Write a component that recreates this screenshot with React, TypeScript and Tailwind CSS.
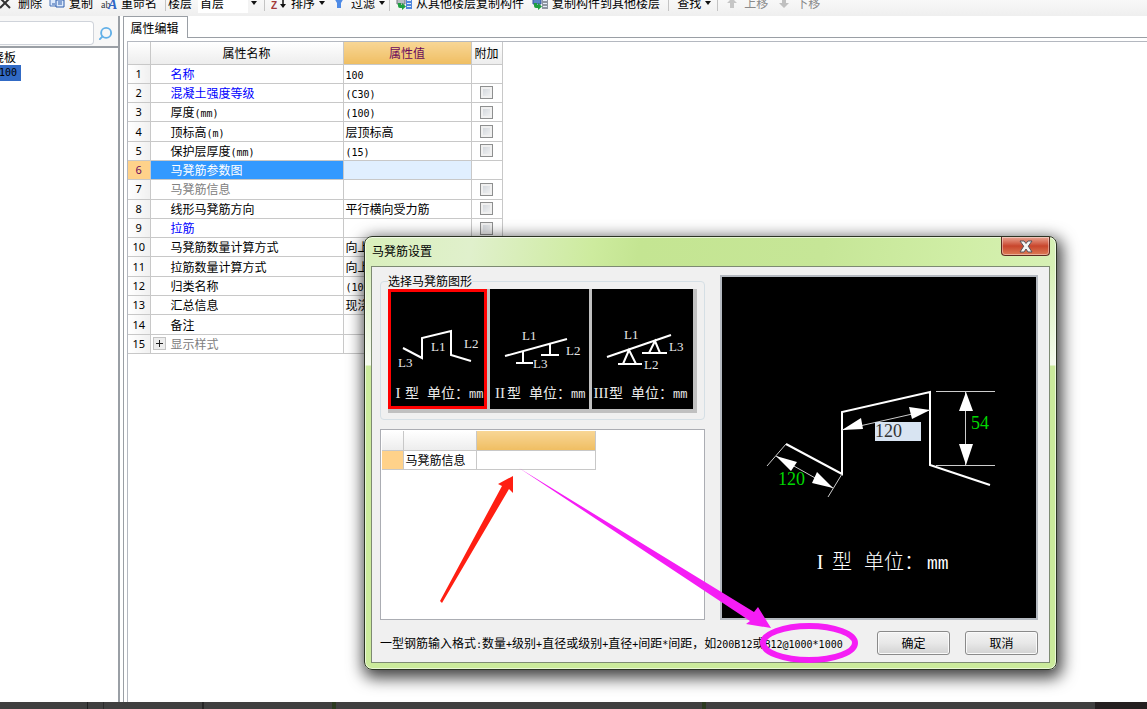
import React from 'react';
import { Search } from 'lucide-react';

type Row = {
  name: string;
  value?: string;
  color?: string;
  check?: boolean;
  selected?: boolean;
  expandable?: boolean;
};

const rows: Row[] = [
  { name: '名称', value: '100', color: 'text-[#0000ff]' },
  { name: '混凝土强度等级', value: '(C30)', color: 'text-[#0000ff]', check: true },
  { name: '厚度(mm)', value: '(100)', check: true },
  { name: '顶标高(m)', value: '层顶标高', check: true },
  { name: '保护层厚度(mm)', value: '(15)', check: true },
  { name: '马凳筋参数图', color: 'text-white', selected: true },
  { name: '马凳筋信息', color: 'text-[#808080]', check: true },
  { name: '线形马凳筋方向', value: '平行横向受力筋', check: true },
  { name: '拉筋', color: 'text-[#0000ff]', check: true },
  { name: '马凳筋数量计算方式', value: '向上', check: true },
  { name: '拉筋数量计算方式', value: '向上', check: true },
  { name: '归类名称', value: '(100)', check: true },
  { name: '汇总信息', value: '现浇', check: true },
  { name: '备注', check: true },
  { name: '显示样式', color: 'text-[#808080]', expandable: true },
];

// Latin runs are half as wide as the Chinese characters around them
const Mixed: React.FC<{ text: string }> = ({ text }) => (
  <>
    {text.split(/([\x20-\x7e]+)/).map((part, i) =>
      i % 2 ? (
        <span key={i} className="text-[10px] leading-none font-['DejaVu_Sans_Mono',monospace]">{part}</span>
      ) : (
        part
      )
    )}
  </>
);

const Caret = () => (
  <svg width="6" height="4" viewBox="0 0 6 4" className="shrink-0">
    <path d="M0 0h6L3 4z" fill="#111" />
  </svg>
);

const Separator: React.FC<{ className: string }> = ({ className }) => (
  <div className={`h-4 w-px shrink-0 bg-[#c4c4c4] ${className}`} />
);

const ToolButton: React.FC<{
  label: string;
  className?: string;
  caret?: boolean;
  disabled?: boolean;
  children?: React.ReactNode;
}> = ({ label, className = '', caret, disabled, children }) => (
  <button
    disabled={disabled}
    className={`flex shrink-0 items-center gap-1 whitespace-nowrap leading-4 ${disabled ? 'text-[#8a8a8a]' : ''} ${className}`}
  >
    {children}
    {label}
    {caret && <Caret />}
  </button>
);

const BuildingIcon: React.FC<{ flip?: boolean }> = ({ flip }) => (
  <svg width="16" height="16" viewBox="0 0 16 16">
    <path d="M1 3h8v6H1z" fill={flip ? '#5b86c8' : '#b9bec4'} stroke={flip ? '#34549a' : '#70767c'} />
    <path d="M10 2h6v12h-6z" fill={flip ? '#8d95a0' : '#4f86dc'} />
    <path d="M11 5.5h4M11 8.500h4M11 11.500h4" stroke="#e6eefb" />
    <path d="M2 8h3v2h1V8l4 3.500L6 15v-2H4q-2 0-2-2z" fill="#1fa040" />
  </svg>
);

const Toolbar = () => (
  <header className="h-4 shrink-0 bg-gradient-to-b from-[#f8f8f8] to-[#efefef]">
    <div className="flex h-1.5 items-center">
      <ToolButton label="删除">
        <svg width="14" height="16" viewBox="0 0 14 16">
          <path d="M0 3l10 10M10 3L0 13" stroke="#333" strokeWidth="2" />
        </svg>
      </ToolButton>
      <ToolButton label="复制" className="ml-[7px]">
        <svg width="16" height="16" viewBox="0 0 16 16">
          <path d="M1 2h8v9H1z" fill="#dce9fb" stroke="#4a74b8" />
          <path d="M7 5h8v7H7z" fill="#dce9fb" stroke="#2c5cab" />
          <path d="M9 7h4M9 9h4M3 9h3" stroke="#2c5cab" />
        </svg>
      </ToolButton>
      <ToolButton label="重命名" className="ml-2">
        <svg width="16" height="16" viewBox="0 0 16 16">
          <text x="0" y="13" fontSize="10" fill="#333" fontFamily="Liberation Serif">ab</text>
          <text x="7" y="14" fontSize="14" fontWeight="bold" fontStyle="italic" fill="#2f66c4" fontFamily="Liberation Serif">A</text>
        </svg>
      </ToolButton>
      <Separator className="ml-2" />
      <label htmlFor="floor" className="ml-0.5 shrink-0">楼层</label>
      <div className="relative ml-1.5 flex h-5 w-[62px] shrink-0 items-center bg-gradient-to-r from-white from-80% to-[#f3f3f3] to-80%">
        <select id="floor" className="h-5 w-full appearance-none px-0.5 leading-4">
          <option>首层</option>
        </select>
        <span className="pointer-events-none absolute right-[3px]"><Caret /></span>
      </div>
      <Separator className="ml-1" />
      <ToolButton label="排序" caret className="ml-1.5">
        <svg width="16" height="16" viewBox="0 0 16 16">
          <text x="0" y="14" fontSize="10" fontWeight="bold" fill="#a33a3a" fontFamily="Liberation Sans">Z</text>
          <path d="M12 2v10" stroke="#111" strokeWidth="1.5" />
          <path d="M9 9h6l-3 4z" fill="#111" />
        </svg>
      </ToolButton>
      <ToolButton label="过滤" caret className="ml-1.5">
        <svg width="16" height="16" viewBox="0 0 16 16">
          <path d="M3 3h10l-3 5v5H6V8z" fill="#4f8be6" />
        </svg>
      </ToolButton>
      <Separator className="ml-1" />
      <ToolButton label="从其他楼层复制构件" className="ml-1.5"><BuildingIcon /></ToolButton>
      <ToolButton label="复制构件到其他楼层" className="ml-2"><BuildingIcon flip /></ToolButton>
      <Separator className="ml-2" />
      <ToolButton label="查找" caret className="ml-2" />
      <Separator className="ml-1.5" />
      <ToolButton label="上移" disabled className="ml-1.5">
        <svg width="16" height="16" viewBox="0 0 16 16">
          <path d="M8 3l5 5h-3v5H6V8H3z" fill="#c6c6c6" />
        </svg>
      </ToolButton>
      <ToolButton label="下移" disabled className="ml-2">
        <svg width="16" height="16" viewBox="0 0 16 16">
          <path d="M8 13l5-5h-3V3H6v5H3z" fill="#c0c0c0" />
        </svg>
      </ToolButton>
    </div>
  </header>
);

const Sidebar = () => (
  <aside className="flex w-[120px] shrink-0 flex-col border-r-2 border-[#9a9fa5]">
    <div className="flex h-[30px] items-end bg-[#f7f7f7] pb-px">
      <input
        aria-label="搜索构件"
        className="h-6 w-[94px] rounded-r-sm border border-l-0 border-[#cfd3da] bg-white"
      />
      <button aria-label="搜索" className="ml-1 pb-1">
        <Search size={15} strokeWidth={3} className="-scale-x-100 text-[#62b0e8]" />
      </button>
    </div>
    <div className="flex-1 border-t-2 border-[#9a9fa5] bg-white pt-px">
      <div className="flex h-4 w-4 items-center justify-end whitespace-nowrap">现浇板</div>
      <div className="flex h-4 w-[21px] items-center justify-end bg-[#316ac5] pr-1">
        <Mixed text="100" />
      </div>
    </div>
  </aside>
);

const PropertyTable = () => (
  <table className="h-[312px] w-[374px] table-fixed border-collapse">
    <colgroup>
      <col className="w-[22px]" />
      <col className="w-[193px]" />
      <col className="w-[128px]" />
      <col className="w-[31px]" />
    </colgroup>
    <thead>
      <tr className="h-[22px] bg-gradient-to-b from-white to-[#ededed]">
        <th className="border-r border-b border-[#c8c8c8]" />
        <th className="border-r border-b border-[#c8c8c8] font-normal">属性名称</th>
        <th className="border-r border-b border-[#c8c8c8] bg-gradient-to-b from-[#f8d695] to-[#efbe62] font-normal text-[#6b0a5c]">
          属性值
        </th>
        <th className="border-r border-b border-[#c8c8c8] font-normal whitespace-nowrap">附加</th>
      </tr>
    </thead>
    <tbody>
      {rows.map((row, i) => (
        <tr key={row.name} className="h-[19px]">
          <td
            className={`border-r border-b border-[#c8c8c8] p-0 text-center text-[11px] font-['Noto_Sans',sans-serif] ${
              row.selected ? 'bg-[#ffd28a] text-[#6b0a5c]' : 'bg-gradient-to-r from-white to-[#f0f0f0]'
            }`}
          >
            {i + 1}
          </td>
          <td className={`border-r border-b border-[#c8c8c8] p-0 ${row.selected ? 'bg-[#3399ff]' : ''}`}>
            <div className="flex h-4 items-center">
              <div className="w-5 shrink-0 pl-0.5">
                {row.expandable && (
                  <button
                    aria-label="展开"
                    className="flex h-[13px] w-[13px] items-center justify-center border border-[#c4c4c4] bg-[#ededed]"
                  >
                    <svg width="7" height="7" viewBox="0 0 7 7">
                      <path d="M0 3.5h7M3.5 0v7" stroke="#222" />
                    </svg>
                  </button>
                )}
              </div>
              <span className={`whitespace-nowrap ${row.color ?? ''}`}>
                <Mixed text={row.name} />
              </span>
            </div>
          </td>
          <td className={`overflow-hidden border-r border-b border-[#c8c8c8] p-0 pl-0.5 whitespace-nowrap ${row.selected ? 'bg-[#e0efff]' : ''}`}>
            <Mixed text={row.value ?? ''} />
          </td>
          <td className="border-r border-b border-[#c8c8c8] p-0">
            {row.check && (
              <input
                type="checkbox"
                aria-label={`附加 ${row.name}`}
                className="mx-auto block h-[13px] w-[13px] appearance-none border border-[#8e8f8f] bg-gradient-to-br from-[#cdd2d8] to-[#f6f6f6] shadow-[inset_0_0_0_2px_#f0f0f0]"
              />
            )}
          </td>
        </tr>
      ))}
    </tbody>
  </table>
);

const Caption: React.FC<{ numeral: string; x: number }> = ({ numeral, x }) => (
  <>
    <text x={x} y="109" fontSize="15" textAnchor="middle" fontFamily="Liberation Serif">{numeral}</text>
    <text x="17" y="109" fontSize="14">型</text>
    <text x="39" y="109" fontSize="14">单位：</text>
    <text x="81" y="109" fontSize="12" fontFamily="Liberation Mono">mm</text>
  </>
);

const Thumb: React.FC<{
  label: string;
  active?: boolean;
  className: string;
  children: React.ReactNode;
}> = ({ label, active, className, children }) => (
  <button
    aria-label={label}
    className={`h-[120px] shrink-0 overflow-hidden bg-black ${className} ${
      active ? 'outline-[3px] -outline-offset-[3px] outline-[#ff0000]' : ''
    }`}
  >
    <svg width="101" height="120" viewBox="0 0 101 120" fill="#e8e8e8" className="font-['Noto_Sans_CJK_SC',sans-serif]">
      {children}
    </svg>
  </button>
);

const shapeLine = { fill: 'none', stroke: '#fff', strokeWidth: 2 };
const shapeLabel = { fontSize: 13, fontFamily: 'Liberation Serif' };

const ShapePicker = () => (
  <fieldset className="rounded border border-[#d5dfe5] px-[7px] pt-0.5 pb-1.5">
    <legend className="h-3 p-0 leading-3">选择马凳筋图形</legend>
    <div className="flex gap-[3px] bg-[#c0c0c0] pr-1 pb-1">
      <Thumb label="I型" active className="w-[99px]">
        <path d="M15 59L34 69V49L63 42V66L83 72" {...shapeLine} />
        <text x="43" y="62" {...shapeLabel}>L1</text>
        <text x="76" y="59" {...shapeLabel}>L2</text>
        <text x="10" y="78" {...shapeLabel}>L3</text>
        <Caption numeral="I" x={10} />
      </Thumb>
      <Thumb label="II型" className="w-[99px]">
        <path d="M15 67L77 50M33 62V74M26 74H43M60 55V66M51 66H69" {...shapeLine} />
        <text x="32" y="51" {...shapeLabel}>L1</text>
        <text x="76" y="66" {...shapeLabel}>L2</text>
        <text x="43" y="79" {...shapeLabel}>L3</text>
        <Caption numeral="II" x={10} />
      </Thumb>
      <Thumb label="III型" className="w-[101px]">
        <path d="M15 68L79 46M26 75H50M31 75L37 61L44 75M50 64H75M57 64L63 52L68 64" {...shapeLine} />
        <text x="32" y="50" {...shapeLabel}>L1</text>
        <text x="52" y="80" {...shapeLabel}>L2</text>
        <text x="77" y="62" {...shapeLabel}>L3</text>
        <Caption numeral="III" x={9} />
      </Thumb>
    </div>
  </fieldset>
);

const ShapeCanvas = () => (
  <div className="relative w-[318px] shrink-0 border-2 border-[#b4b9c0] bg-black">
    <svg width="314" height="341" viewBox="0 0 314 341" fill="#fff" className="font-['Noto_Sans_CJK_SC',sans-serif]">
      <path d="M64 167L120 197V135L208 115V188L268 208" fill="none" stroke="#fff" strokeWidth="2" />
      <path
        d="M214 114.5H273M214 188.5H273M243.5 115V188M120 153L208 133M64 167L45 189M120 197L106 220M54 179L111 211"
        fill="none"
        stroke="#ccc"
      />
      <path d="M244 115L237 134H251zM244 188L237 167H251z" />
      <path d="M120 153L139 141L141 152zM208 133L187 130L190 142z" />
      <path d="M54 179L75 185L69 194zM111 211L95 195L90 206z" />
      <g fill="#00d800" fontSize="18" fontFamily="Liberation Serif">
        <text x="56" y="208">120</text>
        <text x="249" y="152">54</text>
      </g>
      <text x="98" y="292" fontSize="20" textAnchor="middle" fontFamily="Liberation Serif">I</text>
      <text x="110" y="292" fontSize="20" fontWeight="300">型</text>
      <text x="142" y="292" fontSize="20" fontWeight="300">单位：</text>
      <text x="205" y="292" fontSize="18" fontFamily="Liberation Mono">mm</text>
    </svg>
    <input
      aria-label="L1"
      defaultValue="120"
      className="absolute top-[145px] left-[153px] h-[19px] w-[46px] bg-[#d8e4f2] text-lg leading-4 text-[#333] font-['Liberation_Serif',serif]"
    />
  </div>
);

const dialogButton =
  'h-6 w-[73px] rounded-[3px] border border-[#8a8a8a] bg-gradient-to-b from-[#f3f3f3] via-[#e8e8e8] to-[#d2d2d2] shadow-[inset_0_0_0_1px_#fafafa]';

// Hand-drawn marks over the dialog
const Annotations = () => (
  <svg className="pointer-events-none absolute inset-0 h-full w-full">
    <g transform="translate(-365 -237)">
      <path d="M513 476L498 484L502 486L440 601L442 603L509 489L513 493z" fill="#ff1f12" />
      <path d="M519 468L754 612L758 607L771 628L746 624L750 621z" fill="#f51df5" />
      <ellipse cx="809" cy="643" rx="46" ry="17" fill="none" stroke="#f51df5" strokeWidth="6" />
    </g>
  </svg>
);

const Dialog = () => (
  <section
    role="dialog"
    aria-label="马凳筋设置"
    className="absolute top-[236px] left-[364px] w-[693px] rounded-lg border border-[#2c3424] bg-[linear-gradient(to_bottom,transparent_0,transparent_29px,rgba(255,255,255,0.75)_128px,#cbea9b_129px),linear-gradient(100deg,#d9efbb_0,#e0f0cc_14%,#cdeb9e_30%,#c4e592_36%,#c6e697_60%,#d0eea6_78%,#dcf2c0_100%)] px-1.5 pb-1.5 shadow-[inset_0_0_0_1px_rgba(255,255,255,0.6),2px_5px_16px_3px_rgba(0,0,0,0.75)]"
  >
    <div className="flex h-[29px] items-start justify-between">
      <h2 className="pt-1.5 pl-px leading-4">马凳筋设置</h2>
      <button
        aria-label="关闭"
        className="flex h-[19px] w-[49px] items-center justify-center rounded-b-[4px] border border-t-0 border-[#5c2a20] bg-gradient-to-b from-[#e8a391] via-[#c8452c] via-50% to-[#dc7a55] shadow-[inset_0_0_0_1px_rgba(255,255,255,0.4)]"
      >
        <svg width="14" height="13" viewBox="0 0 14 13">
          <path
            d="M1 1h4l2 2.5L9 1h4L9.300 6.200 13 12H9L7 9l-2 3H1l3.700-5.800z"
            fill="#f4f4f4"
            stroke="#56525a"
          />
        </svg>
      </button>
    </div>
    <div className="border border-[#7d8a72] bg-[#f0f0f0] pt-2 pr-[11px] pb-[7px] pl-2">
      <div className="flex justify-between">
        <div className="flex w-[325px] flex-col gap-[9px]">
          <ShapePicker />
          <div className="flex-1 border border-[#abadb3] bg-white p-px">
            <table className="w-[213px] table-fixed border-collapse">
              <colgroup>
                <col className="w-[21px]" />
                <col className="w-[73px]" />
                <col className="w-[119px]" />
              </colgroup>
              <thead>
                <tr className="h-[19px] bg-gradient-to-b from-white to-[#ededed]">
                  <th className="border-r border-b border-[#c8c8c8]" />
                  <th className="border-r border-b border-[#c8c8c8]" />
                  <th className="border-r border-b border-[#c8c8c8] bg-gradient-to-b from-[#f8d695] to-[#efbe62]" />
                </tr>
              </thead>
              <tbody>
                <tr className="h-[19px]">
                  <td className="border-r border-b border-[#c8c8c8] bg-[#ffd28a]" />
                  <td className="border-r border-b border-[#c8c8c8] p-0 pl-0.5 whitespace-nowrap">马凳筋信息</td>
                  <td className="border-r border-b border-[#c8c8c8] p-0">
                    <input aria-label="马凳筋信息" className="block h-4 w-full" />
                  </td>
                </tr>
              </tbody>
            </table>
          </div>
        </div>
        <ShapeCanvas />
      </div>
      <div className="mt-[11px] flex items-center gap-[15px]">
        <p className="flex-1 whitespace-nowrap">
          <Mixed text="一型钢筋输入格式:数量+级别+直径或级别+直径+间距*间距，如200B12或B12@1000*1000" />
        </p>
        <button className={dialogButton}>确定</button>
        <button className={dialogButton}>取消</button>
      </div>
    </div>
    <Annotations />
  </section>
);

const App: React.FC = () => {
  return (
    <div className="relative flex h-screen flex-col overflow-hidden bg-white text-xs leading-4 text-black font-['Noto_Sans_CJK_SC',sans-serif]">
      <Toolbar />
      <div className="flex min-h-0 flex-1">
        <Sidebar />
        <main className="ml-[3px] flex min-w-0 flex-1 flex-col border-l border-[#9a9fa5]">
          <div className="flex h-[22px] shrink-0">
            <button className="w-16 border-t border-r border-[#9a9fa5] pr-0.5">属性编辑</button>
            <div className="flex-1 border-b border-[#9a9fa5]" />
          </div>
          <div className="mt-[3px] ml-[3px] flex-1 border-t border-l border-[#b4b8c0]">
            <PropertyTable />
          </div>
        </main>
      </div>
      <footer className="flex h-[7px] shrink-0 bg-[#3f3f3f]">
        <div className="w-[88px] border-r border-[#1f1f1f]" />
        <div className="w-4 border-r border-[#2a2a2a]" />
        <div className="w-[100px] border-r-2 border-[#252525]" />
        <div className="w-[132px] border-r-4 border-[#2b3a1f]" />
        <div className="w-[370px] border-r-4 border-[#2b3a1f]" />
        <div className="flex-1" />
        <div className="w-[52px] bg-[#241f20]" />
      </footer>
      <Dialog />
    </div>
  );
};

export default App;
